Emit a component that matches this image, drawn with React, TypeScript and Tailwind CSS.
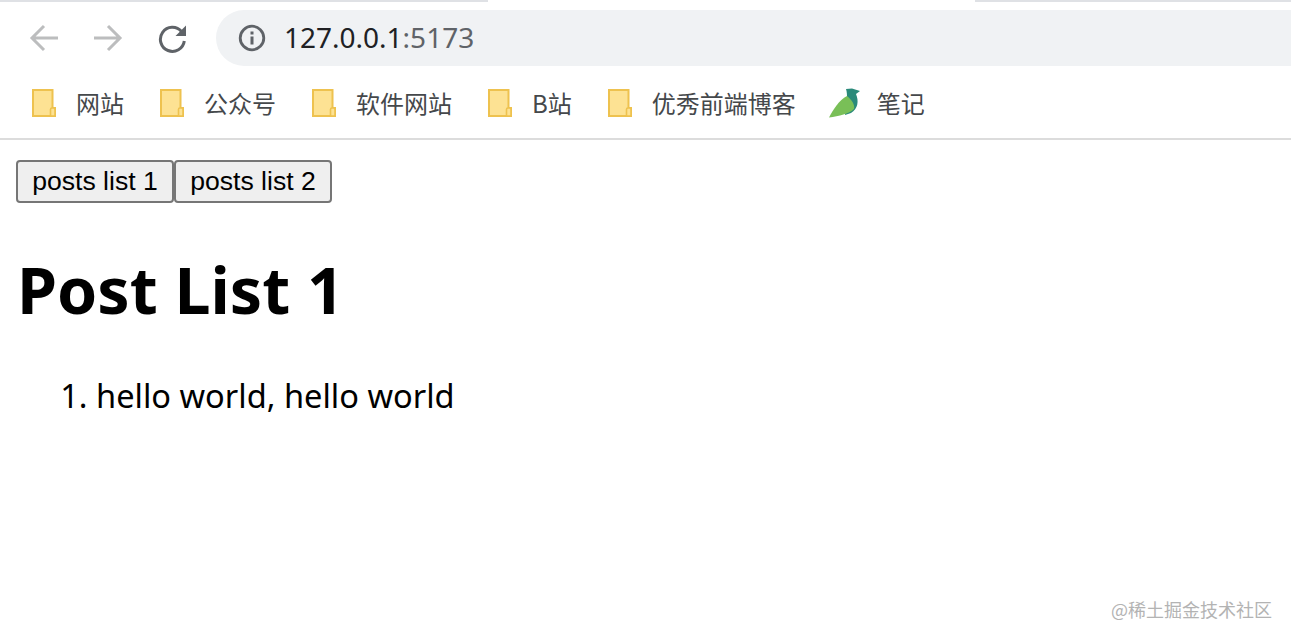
import React from 'react';

const Folder = () => (
  <svg width="24" height="28" viewBox="0 0 24 28" className="shrink-0">
    <path d="M1 1H20.5V19H23V27H1Z" fill="#fde293" stroke="#eec24f" strokeWidth="2" />
    <path d="M18.5 27V20.5A1.5 1.5 0 0 1 20 19H21.5A1.5 1.5 0 0 1 23 20.5V27Z" fill="#fde293" stroke="#eec24f" strokeWidth="1.6" />
  </svg>
);

const Bird = () => (
  <svg width="32" height="30" viewBox="0 0 32 30" className="shrink-0">
    <path d="M17 1 L23 0.5 L31 3 L27 6 C30 13 29 21 22 25 L16 27 L18 11 C18 7 18 4 17 1Z" fill="#2a8a7a" />
    <path d="M0 29.5 C4 22 10 12 18 8 C23 12 26 17 25 21 C20 26 10 28 0 29.5Z" fill="#79bf57" />
  </svg>
);

const bookmarks = [
  { label: '网站', gap: 'mr-[36px]' },
  { label: '公众号', gap: 'mr-[36px]' },
  { label: '软件网站', gap: 'mr-[36px]' },
  { label: 'B站', gap: 'mr-[36px]' },
  { label: '优秀前端博客', gap: 'mr-[33px]' },
];

const App = () => {
  return (
    <div className="relative h-[639px] w-[1291px] overflow-hidden bg-white text-black">
      <div className="flex h-[2px] justify-between">
        <div className="w-[488px] bg-[#dfe1e5]" />
        <div className="w-[316px] bg-[#dfe1e5]" />
      </div>

      <div className="flex h-[74px] items-start pt-[8px] pl-[29px]">
        <div className="flex h-[56px] items-center">
          <svg width="30" height="30" viewBox="0 0 30 30" fill="none" stroke="#bcbdbe" strokeWidth="3">
            <path d="M29 15H3M15 3L3 15L15 27" />
          </svg>
          <svg width="30" height="30" viewBox="0 0 30 30" fill="none" stroke="#bcbdbe" strokeWidth="3" className="ml-[34px]">
            <path d="M1 15H27M15 3L27 15L15 27" />
          </svg>
          <svg width="30" height="30" viewBox="0 0 30 30" fill="none" className="ml-[35px]">
            <path d="M23.5 8.5A12 12 0 1 0 26.3 18" stroke="#5f6368" strokeWidth="3" />
            <path d="M28 2.5V13H17.5Z" fill="#5f6368" />
          </svg>
        </div>
        <div className="ml-[28px] flex h-[56px] flex-1 items-center rounded-l-full bg-[#f0f2f4] pl-[22px] font-['Noto_Sans','Open_Sans',sans-serif] text-[28px]">
          <svg width="28" height="28" viewBox="0 0 28 28" fill="none">
            <circle cx="14" cy="14" r="11.8" stroke="#5f6368" strokeWidth="2.8" />
            <rect x="12.5" y="12.5" width="3" height="8" fill="#5f6368" />
            <rect x="12.5" y="7.5" width="3" height="3" fill="#5f6368" />
          </svg>
          <span className="mb-[2px] ml-[18px] text-[#202124]">127.0.0.1</span>
          <span className="mb-[2px] text-[#5f6368]">:5173</span>
        </div>
      </div>

      <div className="flex h-[64px] items-center border-b-2 border-[#dcdcdc] pb-[8px] pl-[32px] font-['Noto_Sans_CJK_SC','Noto_Sans',sans-serif] text-[24px] text-[#45484b]">
        {bookmarks.map((b) => (
          <div key={b.label} className={`flex items-center gap-[20px] ${b.gap}`}>
            <Folder />
            <span className="mb-[1px]">{b.label}</span>
          </div>
        ))}
        <div className="flex items-center gap-[16px]">
          <Bird />
          <span className="mb-[1px]">笔记</span>
        </div>
      </div>

      <div className="pt-[20px] pl-[16px]">
        <div className="flex font-['Liberation_Sans',sans-serif] text-[26.6px] leading-none">
          <button className="h-[43px] w-[158px] rounded-[4px] border-2 border-[#767676] bg-[#efefef]">posts list 1</button>
          <button className="h-[43px] w-[158px] rounded-[4px] border-2 border-[#767676] bg-[#efefef]">posts list 2</button>
        </div>
        <h1 className="mt-[40px] pl-[1px] font-['Noto_Sans',sans-serif] text-[64.5px] leading-[92px] font-bold">Post List 1</h1>
        <ol className="mt-[38px] list-decimal pl-[44px] font-['Noto_Sans',sans-serif] text-[32.6px] leading-[46px]">
          <li className="ml-[36px]">hello world, hello world</li>
        </ol>
      </div>

      <div className="absolute top-[596px] right-[19px] font-['Noto_Sans_CJK_SC',sans-serif] text-[18px] text-[#b3b3b3]">@稀土掘金技术社区</div>
    </div>
  );
};

export default App;
